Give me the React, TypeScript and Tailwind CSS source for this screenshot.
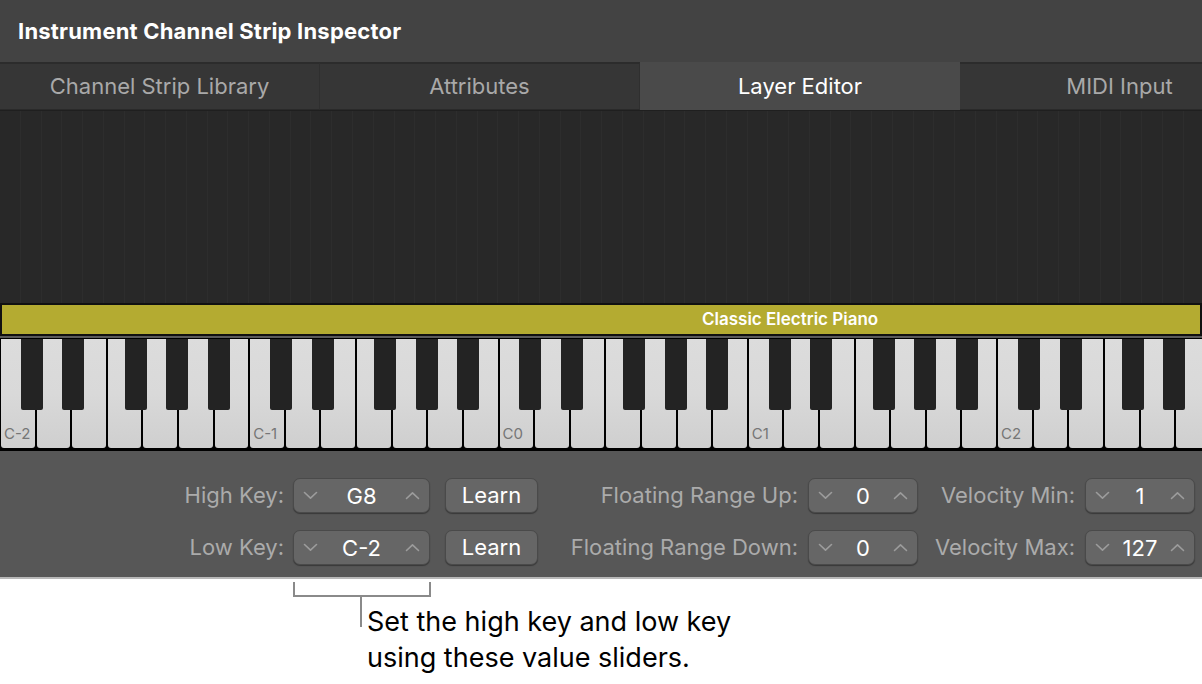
import React from "react";

const OCTAVE = 249.3;
const WHITE_W = OCTAVE / 7;
const SEMI = OCTAVE / 12;
const WHITE_COUNT = 34;
const BLACK_SEMIS = [1, 3, 6, 8, 10];
const OCTAVE_LABELS = ["C-2", "C-1", "C0", "C1", "C2"];

function Chevron({ up }: { up?: boolean }) {
  return (
    <svg width="15" height="9" viewBox="0 0 15 9" className="shrink-0">
      <path
        d={up ? "M1.5 7.5 L7.5 1.8 L13.5 7.5" : "M1.5 1.5 L7.5 7.2 L13.5 1.5"}
        fill="none"
        stroke="#9c9c9c"
        strokeWidth="1.6"
        strokeLinecap="round"
        strokeLinejoin="round"
      />
    </svg>
  );
}

function Stepper({ value, width }: { value: string; width: string }) {
  return (
    <div
      className={`${width} h-[35px] shrink-0 flex items-center justify-between px-[9px] rounded-[7px] bg-[#666666] border border-[#4a4a4a] shadow-[0_1px_1px_rgba(0,0,0,0.35)]`}
    >
      <Chevron />
      <span className="text-white text-[22px] leading-none">{value}</span>
      <Chevron up />
    </div>
  );
}

function Learn() {
  return (
    <div className="ml-[15px] w-[93px] h-[35px] shrink-0 flex items-center justify-center rounded-[7px] bg-[#666666] border border-[#4a4a4a] shadow-[0_1px_1px_rgba(0,0,0,0.35)] text-white text-[22px]">
      Learn
    </div>
  );
}

function ControlRow({
  label1,
  value1,
  label2,
  value2,
  label3,
  value3,
}: {
  label1: string;
  value1: string;
  label2: string;
  value2: string;
  label3: string;
  value3: string;
}) {
  return (
    <div className="flex items-center h-[35px]">
      <div className="w-[284px] text-right text-[#ababab] text-[22px]">{label1}</div>
      <div className="ml-[9px]">
        <Stepper value={value1} width="w-[137px]" />
      </div>
      <Learn />
      <div className="w-[260px] text-right text-[#ababab] text-[22px]">{label2}</div>
      <div className="ml-[10px]">
        <Stepper value={value2} width="w-[110px]" />
      </div>
      <div className="w-[157px] text-right text-[#ababab] text-[22px]">{label3}</div>
      <div className="ml-[10px]">
        <Stepper value={value3} width="w-[110px]" />
      </div>
    </div>
  );
}

function Keyboard() {
  const blacks: number[] = [];
  for (let o = 0; o < 5; o++) {
    for (const s of BLACK_SEMIS) {
      const x = o * OCTAVE + s * SEMI;
      if (x < 1202) blacks.push(x);
    }
  }
  return (
    <div className="relative h-[112px] bg-black overflow-hidden">
      <div className="flex h-full">
        {Array.from({ length: WHITE_COUNT }).map((_, i) => (
          <div
            key={i}
            className="shrink-0 h-full pl-[1px] pr-[1px]"
            style={{ width: WHITE_W }}
          >
            <div className="relative h-[109px] rounded-b-[3px] bg-gradient-to-b from-[#dcdcdc] via-[#d9d9d9] to-[#cfcfcf]">
              {i % 7 === 0 && (
                <span className="absolute left-[3px] bottom-[7px] text-[15px] leading-none text-[#767676]">
                  {OCTAVE_LABELS[i / 7]}
                </span>
              )}
            </div>
          </div>
        ))}
      </div>
      {blacks.map((x, i) => (
        <div
          key={i}
          className="absolute top-0 w-[22px] h-[71px] bg-[#232323] rounded-b-[2px]"
          style={{ left: x }}
        />
      ))}
    </div>
  );
}

export default function App() {
  const tabs = ["Channel Strip Library", "Attributes", "Layer Editor", "MIDI Input"];
  return (
    <div className="w-[1202px] h-[684px] bg-white overflow-hidden font-['Inter','Noto_Sans',sans-serif]">
      {/* Title */}
      <div className="h-[62px] bg-[#434343] flex items-center pl-[18px]">
        <span className="text-white font-bold text-[22px] tracking-[0.2px]">
          Instrument Channel Strip Inspector
        </span>
      </div>

      {/* Tabs */}
      <div className="h-[48px] flex bg-[#363636] overflow-hidden">
        {tabs.map((t) => {
          const active = t === "Layer Editor";
          return (
            <div
              key={t}
              className={
                active
                  ? "w-[320px] shrink-0 flex items-center justify-center bg-[#4a4a4a] text-white text-[22px]"
                  : "w-[320px] shrink-0 flex items-center justify-center bg-[#363636] border-t-[2px] border-t-[#2c2c2c] border-b border-b-[#2a2a2a] border-r border-r-[#2f2f2f] text-[#a9a9a9] text-[22px]"
              }
            >
              {t}
            </div>
          );
        })}
      </div>

      {/* Layer area */}
      <div className="h-[193px] bg-[#282828] flex overflow-hidden border-t border-[#1f1f1f]">
        {Array.from({ length: 58 }).map((_, i) => (
          <div
            key={i}
            className="shrink-0 h-full border-r border-[#2d2d2d]"
            style={{ width: SEMI }}
          />
        ))}
      </div>

      {/* Layer bar */}
      <div className="h-[33px] bg-[#b4ab31] border-[2px] border-[#111] flex items-center pl-[700px]">
        <span className="text-white font-semibold text-[17px]">Classic Electric Piano</span>
      </div>
      <div className="h-[3px] bg-[#5a5a5a] border-b border-black" />

      {/* Keyboard */}
      <Keyboard />

      {/* Controls */}
      <div className="h-[128px] bg-[#575757] pt-[27px] flex flex-col gap-[17px] border-b-[2px] border-[#b8b8b8]">
        <ControlRow
          label1="High Key:"
          value1="G8"
          label2="Floating Range Up:"
          value2="0"
          label3="Velocity Min:"
          value3="1"
        />
        <ControlRow
          label1="Low Key:"
          value1="C-2"
          label2="Floating Range Down:"
          value2="0"
          label3="Velocity Max:"
          value3="127"
        />
      </div>

      {/* Callout */}
      <div className="relative pl-[293px]">
        <div className="w-[138px] h-[15px] mt-[3px] border-l-[2px] border-r-[2px] border-b-[2px] border-[#8a8a8a]" />
        <div className="flex">
          <div className="ml-[67px] w-[2px] h-[30px] bg-[#8a8a8a]" />
          <div className="ml-[5px] mt-[7px] text-black text-[27px] leading-[36px]">
            Set the high key and low key
            <br />
            using these value sliders.
          </div>
        </div>
      </div>
    </div>
  );
}
